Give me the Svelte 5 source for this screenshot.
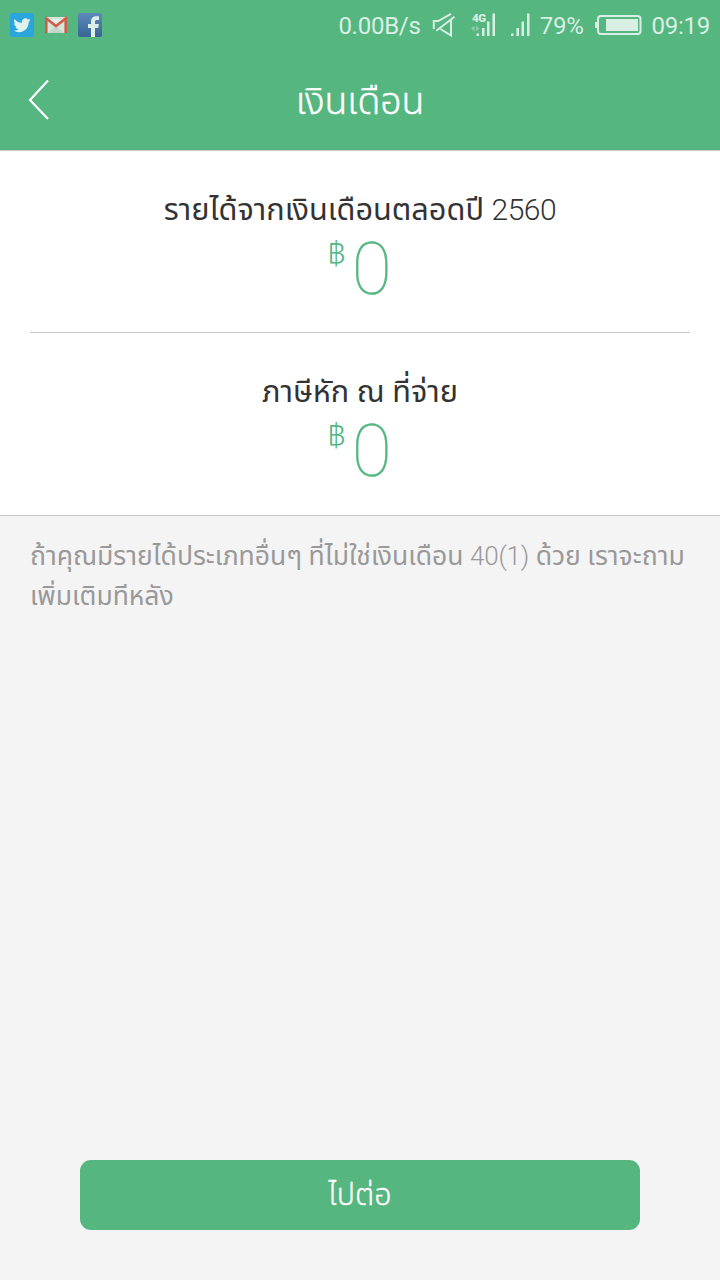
<script lang="ts">
  type Entry = { label: string; year: string; amount: number };

  const entries: Entry[] = [
    { label: 'รายได้จากเงินเดือนตลอดปี', year: '2560', amount: 0 },
    { label: 'ภาษีหัก ณ ที่จ่าย', year: '', amount: 0 },
  ];
</script>

<div class="screen">
  <div class="status-bar">
    <div class="notifications">
      <svg width="24" height="24" viewBox="0 0 24 24" aria-label="Twitter">
        <rect width="24" height="24" rx="2" fill="#2ba6dd" />
        <path
          fill="#dff3ee"
          d="M20.500 6.800l-1.800.6c.7-.5 1.100-1 1.300-1.700l-2.100.8a3.600 3.600 0 0 0-6.100 3.200C8.800 9.600 6.300 8.200 4.500 6c-1 1.800-.4 3.700 1.100 4.700l-1.500-.4c0 1.800 1.200 3.100 2.800 3.500H5.400c.5 1.400 1.700 2.300 3.300 2.400-1.500 1.100-3.200 1.600-5 1.400 6.500 4 15-.1 15-8.600z"
        />
      </svg>
      <svg width="24" height="24" viewBox="0 0 24 24" aria-label="Gmail">
        <rect x="1" y="4" width="22" height="16" rx="1" fill="#d6e4da" />
        <path d="M4 20l8-7 8 7z" fill="#c5d5ca" />
        <path d="M4 6l8 7 8-7z" fill="#e4efe6" />
        <path
          d="M2.300 20V5.500L12 13l9.700-7.500V20"
          fill="none"
          stroke="#cd604d"
          stroke-width="2.600"
        />
      </svg>
      <svg width="24" height="24" viewBox="0 0 24 24" aria-label="Facebook">
        <defs>
          <linearGradient id="fb" x1="0" y1="0" x2="0" y2="1">
            <stop offset="0" stop-color="#5d8abb" />
            <stop offset="1" stop-color="#376594" />
          </linearGradient>
        </defs>
        <rect width="24" height="24" rx="2" fill="url(#fb)" />
        <path
          fill="#dcefe7"
          d="M13 24v-9h-3v-4h3V8.500C13 5 15 3.300 18 3.300h3V7h-2c-1.500 0-2 .6-2 2v2h3.800l-.5 4H17v9z"
        />
      </svg>
    </div>

    <div class="indicators">
      <span class="speed">0.00B/s</span>
      <svg class="mute" width="24" height="26" viewBox="0 0 24 26">
        <path
          d="M1.800 17V9H6.300L19 1.800M4.300 18.800L22.500 4.800M19 8v15.500L8.500 17"
          fill="none"
          stroke="currentColor"
          stroke-width="2"
        />
      </svg>
      <svg class="cell" width="26" height="26" viewBox="0 0 26 26">
        <path
          d="M6.500 21.500H9V24H6.500zM12 16h2.500v8H12zM17 9.500h2.500V24H17zM22.500 1.500H25V24h-2.500z"
          fill="currentColor"
        />
        <path d="M4.500 13.500v6L1 16.500zM6 13.500v6l3.500-3z" fill="currentColor" opacity="0.4" />
        <text x="2" y="10" class="net">4G</text>
      </svg>
      <svg class="cell2" width="20" height="26" viewBox="0 0 20 26">
        <path
          d="M1 21.500h2.500V24H1zM6.500 16H9v8H6.500zM11.500 9.500H14V24h-2.500zM17 1.500h2.500V24H17z"
          fill="currentColor"
        />
      </svg>
      <span class="percent">79%</span>
      <svg class="battery" width="48" height="22" viewBox="0 0 48 22">
        <rect x="4" y="2" width="42.500" height="18" rx="3" fill="none" stroke="currentColor" stroke-width="2" />
        <rect x="1" y="8" width="2.500" height="6" fill="currentColor" />
        <rect x="12" y="5" width="32" height="12" fill="currentColor" />
      </svg>
      <span class="clock">09:19</span>
    </div>
  </div>

  <header class="nav">
    <button class="back" type="button" aria-label="ย้อนกลับ">
      <svg width="24" height="42" viewBox="0 0 24 42">
        <path d="M21 1.500L3 21l18 19" fill="none" stroke="#fff" stroke-width="2.200" />
      </svg>
    </button>
    <h1 class="title">เงินเดือน</h1>
  </header>

  <main class="entries">
    {#each entries as entry}
      <section class="entry">
        <h2 class="label">{entry.label}{#if entry.year}{' '}<span class="year">{entry.year}</span>{/if}</h2>
        <div class="amount">
          <span class="currency">฿</span>
          <span class="value">{entry.amount}</span>
        </div>
      </section>
    {/each}
  </main>

  <p class="note">
    <span class="line">ถ้าคุณมีรายได้ประเภทอื่นๆ ที่ไม่ใช่เงินเดือน <span class="code">40(1)</span> ด้วย เราจะถาม</span>
    <span class="line">เพิ่มเติมทีหลัง</span>
  </p>

  <div class="footer">
    <button class="next" type="button">ไปต่อ</button>
  </div>
</div>

<style>
  :global(body) {
    background: #f4f4f4;
  }

  .screen {
    display: flex;
    flex-direction: column;
    width: 720px;
    height: 1280px;
    overflow: hidden;
    font-family: Roboto, 'Noto Sans Thai', 'Noto Sans', sans-serif;
    color: #333;
    background: #f4f4f4;
  }

  /* ─── Status bar ─── */

  .status-bar {
    display: flex;
    justify-content: space-between;
    height: 50px;
    box-sizing: border-box;
    padding: 0 10px;
    align-items: center;
    background: #56b680;
    color: #d9efe3;
    font-size: 24px;
    letter-spacing: -0.25px;
  }

  .notifications,
  .indicators {
    display: flex;
    align-items: center;
  }

  .indicators span {
    padding-top: 2px;
  }

  .notifications {
    gap: 10px;
  }

  .speed {
    margin-right: 11px;
  }

  .mute {
    margin-right: 14px;
  }

  .cell {
    margin-right: 14px;
  }

  .cell2 {
    margin-right: 10px;
  }

  .battery {
    margin: 0 9px 0 11px;
  }

  .net {
    font-size: 11.5px;
    font-weight: 900;
    letter-spacing: -0.5px;
    fill: currentColor;
  }

  /* ─── Navigation ─── */

  .nav {
    display: grid;
    grid-template-columns: 80px 1fr 80px;
    align-items: center;
    height: 101px;
    box-sizing: border-box;
    background: #56b680;
    border-bottom: 1px solid #c8c8c8;
  }

  .back {
    display: flex;
    padding: 0 0 0 27px;
    border: none;
    background: none;
  }

  .title {
    margin: 0;
    padding-top: 1px;
    font-size: 37.4px;
    font-weight: 300;
    line-height: 50px;
    text-align: center;
    color: #fff;
    -webkit-text-stroke: 0.4px currentColor;
  }

  /* ─── Entries ─── */

  .entries {
    background: #fff;
    border-bottom: 1px solid #c8c8c8;
    padding: 0 30px;
  }

  .entry {
    height: 182px;
    box-sizing: border-box;
    padding-top: 36px;
  }

  .entry:first-child {
    border-bottom: 1px solid #c8c8c8;
  }

  .label {
    margin: 0;
    font-size: 30.7px;
    font-weight: 400;
    line-height: 46px;
    text-align: center;
  }

  .year {
    font-size: 30px;
    font-weight: 300;
    letter-spacing: -0.5px;
  }

  .amount {
    display: flex;
    justify-content: center;
    gap: 6px;
    padding-right: 1px;
    color: #56b680;
  }

  .currency {
    font-family: 'Noto Sans Thai', sans-serif;
    font-size: 32px;
    font-weight: 300;
    line-height: 42px;
  }

  .value {
    font-size: 73px;
    font-weight: 100;
    line-height: 73px;
    -webkit-text-stroke: 0.3px currentColor;
  }

  /* ─── Note ─── */

  .note {
    margin: 0;
    padding: 20px 30px;
    color: #999;
    font-size: 26.5px;
    font-weight: 400;
    line-height: 39px;
  }

  .line {
    display: block;
    white-space: nowrap;
  }

  .code {
    font-size: 26px;
    font-weight: 300;
    letter-spacing: -0.2px;
  }

  /* ─── Footer ─── */

  .footer {
    display: flex;
    margin-top: auto;
    padding: 0 80px 50px;
  }

  .next {
    flex: 1;
    height: 70px;
    padding: 1px 0 0;
    border: none;
    border-radius: 11px;
    background: #56b680;
    color: #fff;
    font: inherit;
    font-size: 30.5px;
    font-weight: 300;
    -webkit-text-stroke: 0.3px currentColor;
  }
</style>
